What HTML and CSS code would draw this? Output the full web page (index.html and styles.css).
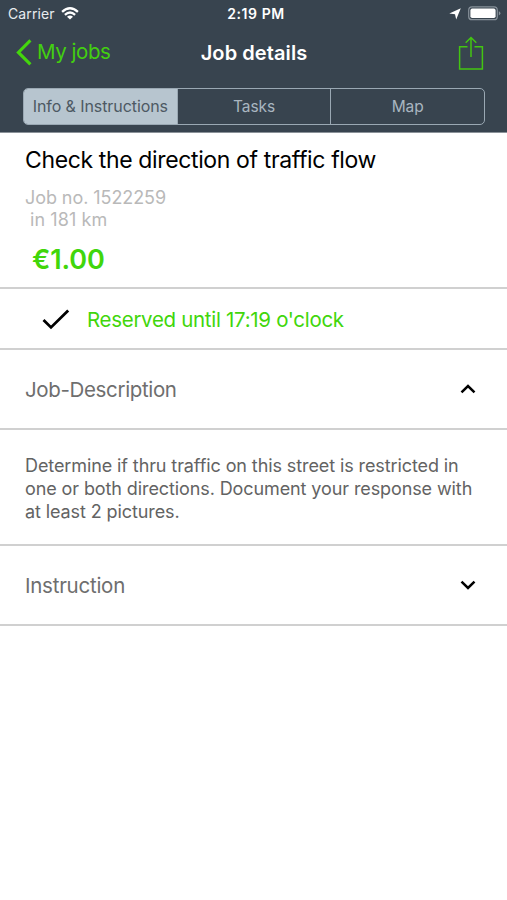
FILE: index.html
```html
<!DOCTYPE html>
<html lang="en">
<head>
<meta charset="utf-8">
<title>Job details</title>
<link rel="stylesheet" href="styles.css">
</head>
<body>
<header class="header">
  <div class="status">
    <div class="carrier"><span class="carrier-name">Carrier</span>
      <svg width="18" height="13" viewBox="0 0 18 13" fill="none" stroke="#fff" stroke-width="2.3"><path d="M1.1 4.9Q9-2.3 16.9 4.9M3.9 7.8Q9 3.2 14.1 7.8"/><path d="M6 9.8Q9 7.2 12 9.8L9 12.6Z" fill="#fff" stroke="none"/></svg>
    </div>
    <span class="time">2:19 PM</span>
    <div class="indicators">
      <svg width="12" height="12" viewBox="0 0 12 12"><path d="M11.8.3L7.2 11.6L6 6.2L.3 5.4Z" fill="#fff"/></svg>
      <svg width="33" height="15" viewBox="0 0 33 15"><rect x=".7" y=".9" width="28.6" height="12.8" rx="3.3" fill="none" stroke="#87919a" stroke-width="1.2"/><rect x="2.4" y="2.6" width="25.2" height="9.4" rx="1.8" fill="#fff"/><path d="M30.8 5.2Q32.4 5.8 32.4 7.3T30.8 9.4Z" fill="#87919a"/></svg>
    </div>
  </div>
  <nav class="nav">
    <a class="back">
      <svg width="16" height="27" viewBox="0 0 16 27" fill="none" stroke="#44d60d" stroke-width="3.1"><path d="M14.4 1.4L2.4 13.4L14.4 25.4"/></svg>
      <span class="back-label">My jobs</span>
    </a>
    <h1 class="title">Job details</h1>
    <svg class="share" width="26" height="35" viewBox="0 0 26 35" fill="none" stroke="#43c512" stroke-width="1.5"><path d="M9.5 10.7H1.6V33H24.4V10.7H16.5M13 21V1.8M7.7 6.8L13 1.5L18.3 6.8"/></svg>
  </nav>
  <div class="tabs">
    <span class="tab active">Info &amp; Instructions</span>
    <span class="tab">Tasks</span>
    <span class="tab">Map</span>
  </div>
</header>
<main>
  <section class="summary">
    <h2 class="job-title">Check the direction of traffic flow</h2>
    <p class="meta number">Job no. 1522259</p>
    <p class="meta distance">in 181 km</p>
    <p class="price">€1.00</p>
  </section>
  <section class="reserved">
    <svg width="28" height="21" viewBox="0 0 28 21" fill="none" stroke="#000" stroke-width="2.8"><path d="M1.5 11.1L9 18.4L26.2 1.5"/></svg>
    <span class="reserved-label">Reserved until 17:19 o'clock</span>
  </section>
  <section class="row">
    <span class="job-desc">Job-Description</span>
    <svg width="16" height="12" viewBox="0 0 16 12" fill="none" stroke="#000" stroke-width="2.5"><path d="M1.5 8.4L8 2L14.5 8.4"/></svg>
  </section>
  <section class="description">
    <p>Determine if thru traffic on this street is restricted in</p>
    <p>one or both directions. Document your response with</p>
    <p>at least 2 pictures.</p>
  </section>
  <section class="row">
    <span class="instruction">Instruction</span>
    <svg width="16" height="12" viewBox="0 0 16 12" fill="none" stroke="#000" stroke-width="2.5"><path d="M1.5 1.6L8 8L14.5 1.6"/></svg>
  </section>
</main>
</body>
</html>
```

FILE: styles.css
```css
* { box-sizing: border-box; }
body { margin: 0; background: #fff; font-family: Inter, "Liberation Sans", sans-serif; color: #000; }
h1, h2, p { margin: 0; font-weight: 400; }
svg { display: block; flex: none; }
span, p, h1, h2 { white-space: nowrap; }
.header { height: 133px; background: #38444f; border-bottom: 1px solid #8b9299; }
.status { height: 27px; display: grid; grid-template-columns: 1fr auto 1fr; align-items: center; padding: 0 6px 0 8px; color: #fff; font-size: 14px; }
.carrier { display: flex; align-items: center; gap: 6px; color: #e8ecef; letter-spacing: 0.1px; }
.time { font-weight: 600; font-size: 14px; letter-spacing: 0.6px; padding-left: 3px; }
.indicators { display: flex; align-items: center; justify-content: flex-end; gap: 7px; }
.nav { height: 52px; display: grid; grid-template-columns: 1fr auto 1fr; align-items: center; padding: 0 23px 0 16px; }
.back { display: flex; align-items: center; gap: 5px; color: #43cf10; font-size: 20.5px; letter-spacing: -0.45px; line-height: 24px; }
.back svg { margin-top: -1px; }
.back-label { margin-top: -2px; }
.title { color: #fff; font-size: 20px; font-weight: 600; letter-spacing: 0.08px; padding-left: 8px; margin-top: -1px; }
.share { justify-self: end; }
.tabs { display: flex; height: 37px; margin: 9px 22px 0 23px; border: 1.5px solid #9aa8b3; border-radius: 5px; overflow: hidden; color: #a9b6c0; font-size: 15.5px; letter-spacing: -0.1px; }
.tab { flex: 1; display: flex; align-items: center; justify-content: center; padding-bottom: 1px; }
.tab + .tab { border-left: 1px solid #9aa8b3; }
.active { background: #b7c5cf; color: #4d5963; font-size: 16px; letter-spacing: -0.08px; }
.summary { height: 156px; padding: 13px 25px 0; border-bottom: 2px solid #d0d0d0; }
.job-title { font-size: 23px; line-height: 28px; letter-spacing: -0.37px; }
.meta { color: #b9b9b9; font-size: 18px; line-height: 22px; }
.number { margin-top: 13px; letter-spacing: -0.07px; }
.distance { padding-left: 5px; letter-spacing: 0.1px; }
.price { color: #41d60b; font-size: 27px; font-weight: 600; line-height: 32px; margin-top: 13px; padding-left: 7px; letter-spacing: -0.1px; }
.reserved { height: 61px; display: flex; align-items: center; gap: 17px; padding: 2px 0 0 42px; border-bottom: 2px solid #d0d0d0; color: #41d60b; font-size: 20.5px; letter-spacing: -0.31px; }
.row { height: 80px; display: flex; align-items: center; justify-content: space-between; padding: 1px 31px 0 25px; border-bottom: 2px solid #d0d0d0; color: #6e6e6e; font-size: 20.5px; letter-spacing: -0.35px; }
.instruction { letter-spacing: -0.25px; }
.description { height: 116px; padding: 24px 25px 0; border-bottom: 2px solid #d0d0d0; color: #636363; font-size: 18px; line-height: 23px; letter-spacing: -0.1px; }
```
